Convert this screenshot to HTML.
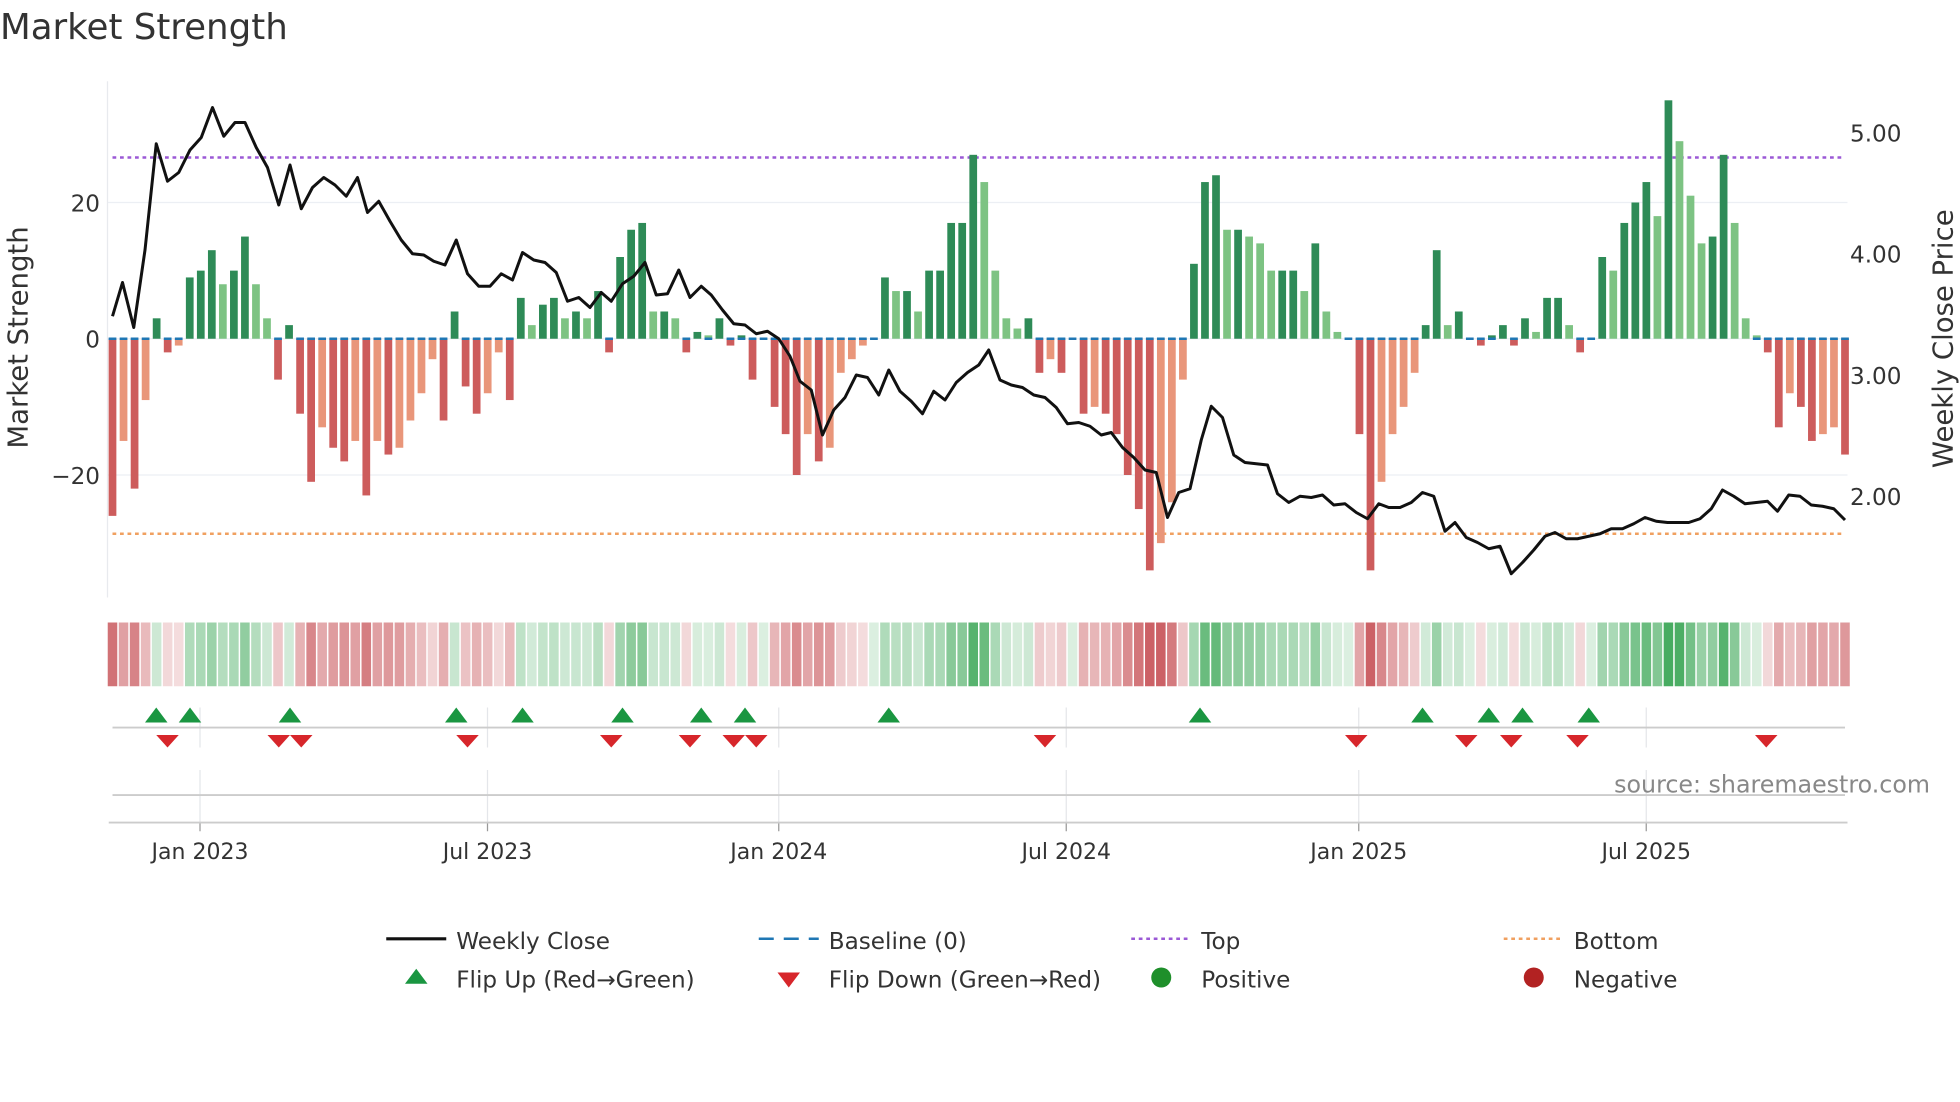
<!DOCTYPE html>
<html><head><meta charset="utf-8">
<style>
html,body{margin:0;padding:0;background:#fff;}
svg{display:block;font-family:"DejaVu Sans","Liberation Sans",sans-serif;}
</style></head>
<body>
<svg id="c" width="1960" height="1102" viewBox="0 0 1568 881.6" xmlns="http://www.w3.org/2000/svg">
<rect width="1568" height="882" fill="#fff"/>
<text x="0" y="31" font-size="28.5" fill="#333">Market Strength</text>
<g id="grid"></g>
<g id="bars"></g>
<g id="heat"></g>
<g id="marks"></g>
<text x="-270" y="22" transform="rotate(-90)" font-size="22" fill="#333" text-anchor="middle">Market Strength</text>
<text x="-271" y="1562" transform="rotate(-90)" font-size="22" fill="#333" text-anchor="middle">Weekly Close Price</text>
<g font-size="18.5" fill="#333">
<text x="80" y="169" text-anchor="end">20</text>
<text x="80" y="278" text-anchor="end">0</text>
<text x="80" y="387" text-anchor="end">−20</text>
<text x="1480" y="113">5.00</text>
<text x="1480" y="210">4.00</text>
<text x="1480" y="307">3.00</text>
<text x="1480" y="404">2.00</text>
</g>
<g font-size="17.6" fill="#333" text-anchor="middle">
<text x="160" y="687">Jan 2023</text>
<text x="390" y="687">Jul 2023</text>
<text x="623" y="687">Jan 2024</text>
<text x="853" y="687">Jul 2024</text>
<text x="1087" y="687">Jan 2025</text>
<text x="1317" y="687">Jul 2025</text>
</g>
<text x="1544" y="634" font-size="19" fill="#888" text-anchor="end">source: sharemaestro.com</text>
<g font-size="18.5" fill="#333">
<line x1="309" y1="751" x2="357" y2="751" stroke="#111" stroke-width="2.5"/>
<text x="365" y="759">Weekly Close</text>
<line x1="607" y1="751" x2="655" y2="751" stroke="#1f77b4" stroke-width="2" stroke-dasharray="12,8"/>
<text x="663" y="759">Baseline (0)</text>
<line x1="905" y1="751" x2="953" y2="751" stroke="#9b59d6" stroke-width="2" stroke-dasharray="3,3"/>
<text x="961" y="759">Top</text>
<line x1="1203" y1="751" x2="1251" y2="751" stroke="#f0a060" stroke-width="2" stroke-dasharray="3,3"/>
<text x="1259" y="759">Bottom</text>
<polygon points="324,787 333,775 342,787" fill="#1a9641"/>
<text x="365" y="790">Flip Up (Red→Green)</text>
<polygon points="622,778 640,778 631,790" fill="#d7262b"/>
<text x="663" y="790">Flip Down (Green→Red)</text>
<circle cx="929" cy="782" r="8" fill="#1e8f2a"/>
<text x="961" y="790">Positive</text>
<circle cx="1227" cy="782" r="8" fill="#b22222"/>
<text x="1259" y="790">Negative</text>
</g>
<polyline id="price" fill="none" stroke="#111" stroke-width="2.4" stroke-linejoin="round"/>
</svg>
<script>
var NS="http://www.w3.org/2000/svg";
function el(p,t,a){var e=document.createElementNS(NS,t);for(var k in a)e.setAttribute(k,a[k]);p.appendChild(e);return e;}
var vals=[-26,-15,-22,-9,3,-2,-1,9,10,13,8,10,15,8,3,-6,2,-11,-21,-13,-16,-18,-15,-23,-15,-17,-16,-12,-8,-3,-12,4,-7,-11,-8,-2,-9,6,2,5,6,3,4,3,7,-2,12,16,17,4,4,3,-2,1,0.5,3,-1,0.5,-6,0,-10,-14,-20,-14,-18,-16,-5,-3,-1,0,9,7,7,4,10,10,17,17,27,23,10,3,1.5,3,-5,-3,-5,0,-11,-10,-11,-14,-20,-25,-34,-30,-24,-6,11,23,24,16,16,15,14,10,10,10,7,14,4,1,0,-14,-34,-21,-14,-10,-5,2,13,2,4,0,-1,0.5,2,-1,3,1,6,6,2,-2,0,12,10,17,20,23,18,35,29,21,14,15,27,17,3,0.5,-2,-13,-8,-10,-15,-14,-13,-17];
var n=vals.length,x0=90,x1=1476,st=(x1-x0)/(n-1),bw=st*0.7;
var g=document.getElementById('grid');
[162,271,380].forEach(function(y){el(g,'line',{x1:86,x2:1478,y1:y,y2:y,stroke:'#eceff4','stroke-width':1});});
el(g,'line',{x1:86,x2:86,y1:65,y2:478,stroke:'#e8eaee','stroke-width':1});
[160,390,623,853,1087,1317].forEach(function(x){el(g,'line',{x1:x,x2:x,y1:566,y2:598,stroke:'#e4e6ea'});el(g,'line',{x1:x,x2:x,y1:616,y2:658,stroke:'#e4e6ea'});el(g,'line',{x1:x,x2:x,y1:658,y2:665,stroke:'#999'});});
el(g,'line',{x1:90,x2:1476,y1:582,y2:582,stroke:'#ccc','stroke-width':1.5});
el(g,'line',{x1:90,x2:1476,y1:636,y2:636,stroke:'#ccc','stroke-width':1.5});
el(g,'line',{x1:87,x2:1478,y1:658,y2:658,stroke:'#ccc','stroke-width':1.5});
var b=document.getElementById('bars'),h=document.getElementById('heat');
el(b,'line',{x1:90,x2:1476,y1:126,y2:126,stroke:'#9b59d6','stroke-width':2,'stroke-dasharray':'3,3'});
el(b,'line',{x1:90,x2:1476,y1:427,y2:427,stroke:'#f0a060','stroke-width':2,'stroke-dasharray':'3,3'});
for(var i=0;i<n;i++){var v=vals[i],x=x0+i*st,pv=i?vals[i-1]:0;
 var strong=Math.abs(v)>=Math.abs(pv)||(v>0)!=(pv>0);
 var col=v>=0?(strong?'#2e8b57':'#7dc383'):(strong?'#cd5c5c':'#e9967a');
 var y=271-v*5.45;
 if(Math.abs(v)>0.2)el(b,'rect',{x:x-bw/2,y:Math.min(y,271),width:bw,height:Math.abs(v)*5.45,fill:col});
 if(v<=0.5)el(b,'line',{x1:x-bw/2,x2:x+bw/2,y1:271,y2:271,stroke:'#1f77b4','stroke-width':2});
 var a=Math.min(Math.abs(v)/30,1)*0.75+0.18;
 el(h,'rect',{x:x-st/2+0.6,y:498,width:st-1.2,height:51,fill:v>=0?'#3aa655':'#c8555a','fill-opacity':a});
}
var m=document.getElementById('marks');
[125,152,232,365,418,498,561,596,711,960,1138,1191,1218,1271].forEach(function(x){el(m,'polygon',{points:(x-9)+',578 '+x+',566 '+(x+9)+',578',fill:'#1a9641'});});
[134,223,241,374,489,552,587,605,836,1085,1173,1209,1262,1413].forEach(function(x){el(m,'polygon',{points:(x-9)+',588 '+(x+9)+',588 '+x+',598',fill:'#d7262b'});});
var P=[[90,253],[98,226],[107,262],[116,200],[125,115],[134,145],[143,138],[152,120],[161,110],[170,86],[179,109],[188,98],[196,98],[205,118],[214,134],[223,164],[232,132],[241,167],[250,150],[259,142],[268,148],[277,157],[286,142],[294,170],[303,161],[312,177],[321,192],[330,203],[339,204],[347,209],[356,212],[365,192],[374,219],[383,229],[392,229],[401,219],[410,224],[418,202],[427,208],[436,210],[445,218],[454,241],[463,238],[472,246],[481,234],[489,241],[498,227],[507,221],[516,210],[525,236],[534,235],[543,216],[552,238],[561,229],[569,236],[578,248],[587,259],[596,260],[605,267],[614,265],[623,271],[632,285],[640,305],[649,312],[658,348],[667,328],[676,318],[685,300],[694,302],[703,316],[711,296],[720,313],[729,321],[738,331],[747,313],[756,320],[765,306],[774,298],[783,292],[791,280],[800,304],[809,308],[818,310],[827,316],[836,318],[845,326],[854,339],[863,338],[872,341],[881,348],[889,346],[898,358],[907,366],[916,376],[925,378],[934,414],[943,394],[952,391],[961,352],[969,325],[978,334],[987,364],[996,370],[1005,371],[1014,372],[1022,395],[1031,402],[1040,397],[1049,398],[1058,396],[1067,404],[1076,403],[1085,410],[1094,415],[1103,403],[1111,406],[1120,406],[1129,402],[1138,394],[1147,397],[1156,425],[1164,418],[1173,430],[1182,434],[1191,439],[1200,437],[1209,459],[1218,450],[1227,440],[1236,429],[1244,426],[1253,431],[1262,431],[1271,429],[1280,427],[1289,423],[1298,423],[1307,419],[1316,414],[1325,417],[1334,418],[1342,418],[1351,418],[1360,415],[1369,407],[1378,392],[1387,397],[1396,403],[1405,402],[1414,401],[1422,409],[1431,396],[1440,397],[1449,404],[1458,405],[1467,407],[1476,416]];
document.getElementById('price').setAttribute('points',P.map(function(p){return p.join(',');}).join(' '));
</script>
</body></html>
